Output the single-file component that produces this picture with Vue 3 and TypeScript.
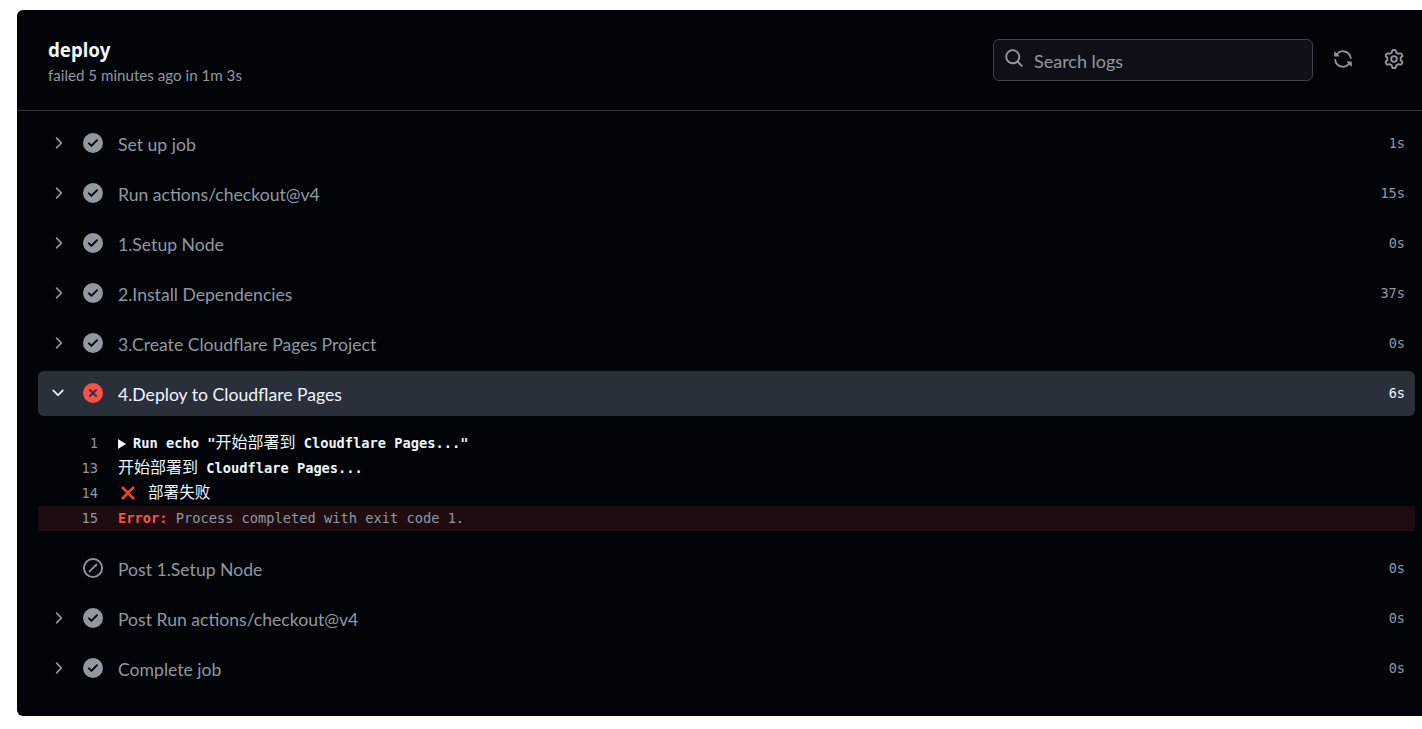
<script setup lang="ts">
type Status = 'ok' | 'fail' | 'skip'
interface Step { name: string; time: string; status: Status; chevron: boolean; open?: boolean }

const before: Step[] = [
  { name: 'Set up job', time: '1s', status: 'ok', chevron: true },
  { name: 'Run actions/checkout@v4', time: '15s', status: 'ok', chevron: true },
  { name: '1.Setup Node', time: '0s', status: 'ok', chevron: true },
  { name: '2.Install Dependencies', time: '37s', status: 'ok', chevron: true },
  { name: '3.Create Cloudflare Pages Project', time: '0s', status: 'ok', chevron: true },
  { name: '4.Deploy to Cloudflare Pages', time: '6s', status: 'fail', chevron: true, open: true },
]
const after: Step[] = [
  { name: 'Post 1.Setup Node', time: '0s', status: 'skip', chevron: false },
  { name: 'Post Run actions/checkout@v4', time: '0s', status: 'ok', chevron: true },
  { name: 'Complete job', time: '0s', status: 'ok', chevron: true },
]
const groups: Step[][] = [before, after]

const icons: Record<Status, string> = {
  ok: 'M8 16A8 8 0 1 1 8 0a8 8 0 0 1 0 16Zm3.78-9.72a.751.751 0 0 0-.018-1.042.751.751 0 0 0-1.042-.018L6.75 9.19 5.28 7.72a.751.751 0 0 0-1.042.018.751.751 0 0 0-.018 1.042l2 2a.75.75 0 0 0 1.06 0Z',
  fail: 'M2.343 13.657A8 8 0 1 1 13.658 2.343 8 8 0 0 1 2.343 13.657ZM6.03 4.97a.751.751 0 0 0-1.042.018.751.751 0 0 0-.018 1.042L6.94 8 4.97 9.97a.749.749 0 0 0 .326 1.275.749.749 0 0 0 .734-.215L8 9.06l1.97 1.97a.749.749 0 0 0 1.275-.326.749.749 0 0 0-.215-.734L9.06 8l1.97-1.97a.749.749 0 0 0-.326-1.275.749.749 0 0 0-.734.215L8 6.94Z',
  skip: 'M8 0a8 8 0 1 1 0 16A8 8 0 0 1 8 0ZM1.5 8a6.5 6.5 0 1 0 13 0 6.5 6.5 0 0 0-13 0Zm9.78-2.22-5.5 5.5a.749.749 0 0 1-1.275-.326.749.749 0 0 1 .215-.734l5.5-5.5a.751.751 0 0 1 1.042.018.751.751 0 0 1 .018 1.042Z',
}
const chevronRight = 'M6.22 3.22a.75.75 0 0 1 1.06 0l4.25 4.25a.75.75 0 0 1 0 1.06l-4.25 4.25a.751.751 0 0 1-1.042-.018.751.751 0 0 1-.018-1.042L9.94 8 6.22 4.28a.75.75 0 0 1 0-1.06Z'
const chevronDown = 'M12.78 5.22a.749.749 0 0 1 0 1.06l-4.25 4.25a.749.749 0 0 1-1.06 0L3.22 6.28a.749.749 0 1 1 1.06-1.06L8 8.939l3.72-3.719a.749.749 0 0 1 1.06 0Z'
const search = 'M10.68 11.74a6 6 0 0 1-7.922-8.982 6 6 0 0 1 8.982 7.922l3.04 3.04a.749.749 0 0 1-.326 1.275.749.749 0 0 1-.734-.215ZM11.5 7a4.499 4.499 0 1 0-8.997 0A4.499 4.499 0 0 0 11.5 7Z'
const sync = 'M1.705 8.005a.75.75 0 0 1 .834.656 5.5 5.5 0 0 0 9.592 2.97l-1.204-1.204a.25.25 0 0 1 .177-.427h3.646a.25.25 0 0 1 .25.25v3.646a.25.25 0 0 1-.427.177l-1.38-1.38A7.002 7.002 0 0 1 1.05 8.84a.75.75 0 0 1 .656-.834ZM8 2.5a5.487 5.487 0 0 0-4.131 1.869l1.204 1.204A.25.25 0 0 1 4.896 6H1.25A.25.25 0 0 1 1 5.75V2.104a.25.25 0 0 1 .427-.177l1.38 1.38A7.002 7.002 0 0 1 14.95 7.16a.75.75 0 0 1-1.49.178A5.5 5.5 0 0 0 8 2.5Z'
const gear = 'M8 0a8.2 8.2 0 0 1 .701.031C9.444.095 9.99.645 10.16 1.29l.288 1.107c.018.066.079.158.212.224.231.114.454.243.668.386.123.082.233.09.299.071l1.103-.303c.644-.176 1.392.021 1.82.63.27.385.506.792.704 1.218.315.675.111 1.422-.364 1.891l-.814.806c-.049.048-.098.147-.088.294.016.257.016.515 0 .772-.01.147.038.246.088.294l.814.806c.475.469.679 1.216.364 1.891a7.977 7.977 0 0 1-.704 1.217c-.428.61-1.176.807-1.82.63l-1.102-.302c-.067-.019-.177-.011-.3.071a5.909 5.909 0 0 1-.668.386c-.133.066-.194.158-.211.224l-.29 1.106c-.168.646-.715 1.196-1.458 1.26a8.006 8.006 0 0 1-1.402 0c-.743-.064-1.289-.614-1.458-1.26l-.289-1.106c-.018-.066-.079-.158-.212-.224a5.738 5.738 0 0 1-.668-.386c-.123-.082-.233-.09-.299-.071l-1.103.303c-.644.176-1.392-.021-1.82-.63a8.12 8.12 0 0 1-.704-1.218c-.315-.675-.111-1.422.363-1.891l.815-.806c.05-.048.098-.147.088-.294a6.214 6.214 0 0 1 0-.772c.01-.147-.038-.246-.088-.294l-.815-.806C.635 6.045.431 5.298.746 4.623a7.92 7.92 0 0 1 .704-1.217c.428-.61 1.176-.807 1.82-.63l1.102.302c.067.019.177.011.3-.071.214-.143.437-.272.668-.386.133-.066.194-.158.211-.224l.29-1.106C6.009.645 6.556.095 7.299.03 7.53.01 7.764 0 8 0Zm-.571 1.525c-.036.003-.108.036-.137.146l-.289 1.105c-.147.561-.549.967-.998 1.189-.173.086-.34.183-.5.29-.417.278-.97.423-1.529.27l-1.103-.303c-.109-.03-.175.016-.195.045-.22.312-.412.644-.573.99-.014.031-.021.11.059.19l.815.806c.411.406.562.957.53 1.456a4.709 4.709 0 0 0 0 .582c.032.499-.119 1.05-.53 1.456l-.815.806c-.081.08-.073.159-.059.19.162.346.353.677.573.989.02.03.085.076.195.046l1.102-.303c.56-.153 1.113-.008 1.53.27.161.107.328.204.501.29.447.222.85.629.997 1.189l.289 1.105c.029.109.101.143.137.146a6.6 6.6 0 0 0 1.142 0c.036-.003.108-.036.137-.146l.289-1.105c.147-.561.549-.967.998-1.189.173-.086.34-.183.5-.29.417-.278.97-.423 1.529-.27l1.103.303c.109.029.175-.016.195-.045.22-.313.411-.644.573-.99.014-.031.021-.11-.059-.19l-.815-.806c-.411-.406-.562-.957-.53-1.456a4.709 4.709 0 0 0 0-.582c-.032-.499.119-1.05.53-1.456l.815-.806c.081-.08.073-.159.059-.19a6.464 6.464 0 0 0-.573-.989c-.02-.03-.085-.076-.195-.046l-1.102.303c-.56.153-1.113.008-1.53-.27a4.44 4.44 0 0 0-.501-.29c-.447-.222-.85-.629-.997-1.189l-.289-1.105c-.029-.11-.101-.143-.137-.146a6.6 6.6 0 0 0-1.142 0ZM11 8a3 3 0 1 1-6 0 3 3 0 0 1 6 0ZM9.5 8a1.5 1.5 0 1 0-3.001.001A1.5 1.5 0 0 0 9.5 8Z'
</script>

<template>
  <main class="card">
    <header class="head">
      <div class="titles">
        <h1 class="title">deploy</h1>
        <p class="sub">failed 5 minutes ago in 1m 3s</p>
      </div>
      <div class="tools">
        <label class="search">
          <svg class="search-icon" viewBox="0 0 16 16"><path :d="search" /></svg>
          <span class="placeholder">Search logs</span>
        </label>
        <svg class="tool sync" viewBox="0 0 16 16"><path :d="sync" /></svg>
        <svg class="tool" viewBox="0 0 16 16"><path :d="gear" /></svg>
      </div>
    </header>

    <section class="steps">
      <template v-for="(group, g) in groups" :key="g">
        <div class="group">
          <div v-for="step in group" :key="step.name" class="step" :class="{ open: step.open }">
            <span class="chev">
              <svg v-if="step.chevron" viewBox="0 0 16 16"><path :d="step.open ? chevronDown : chevronRight" /></svg>
            </span>
            <svg class="status" :class="step.status" viewBox="0 0 16 16"><path :d="icons[step.status]" fill-rule="evenodd" /></svg>
            <span class="name">{{ step.name }}</span>
            <span class="time">{{ step.time }}</span>
          </div>
        </div>
        <div v-if="g === 0" class="log">
          <div class="line strong">
            <span class="num">1</span>
            <span class="txt"><i class="tri"></i>Run echo "<span class="cjk">开始部署到</span> Cloudflare Pages..."</span>
          </div>
          <div class="line strong">
            <span class="num">13</span>
            <span class="txt"><span class="cjk">开始部署到</span> Cloudflare Pages...</span>
          </div>
          <div class="line strong">
            <span class="num">14</span>
            <span class="txt">
              <svg class="cross" viewBox="0 0 16 16"><path d="M2 2 14 14M14 2 2 14" /></svg><span class="cjk short">部署失败</span>
            </span>
          </div>
          <div class="line err">
            <span class="num">15</span>
            <span class="txt"><b class="errlabel">Error:</b> Process completed with exit code 1.</span>
          </div>
        </div>
      </template>
    </section>
  </main>
</template>

<style scoped>
.card {
  margin: 10px 0 0 17px;
  height: 706px;
  background: #010409;
  border-radius: 6px 0 0 6px;
  overflow: hidden;
  font-family: Lato, "Noto Sans CJK SC", sans-serif;
  display: flex;
  flex-direction: column;
}
.head {
  height: 100px;
  flex: none;
  box-sizing: content-box;
  border-bottom: 1px solid #30363d;
  display: flex;
  align-items: center;
  justify-content: space-between;
  padding: 0 18px 0 31px;
}
.titles {
  margin-top: 2px;
}
.title {
  margin: 0 0 2px;
  color: #f0f6fc;
  font-family: "Noto Sans", sans-serif;
  font-size: 18.7px;
  line-height: 26px;
  font-weight: 700;
}
.sub {
  margin: 0;
  color: #9198a1;
  font-size: 15.15px;
  line-height: 20px;
}
.tools {
  display: flex;
  align-items: center;
}
.search {
  width: 320px;
  height: 42px;
  box-sizing: border-box;
  border: 1px solid #3d444d;
  border-radius: 6px;
  background: #0d1117;
  display: flex;
  align-items: center;
  padding: 0 0 0 10px;
}
.search-icon {
  width: 20px;
  height: 20px;
  fill: #9198a1;
  margin-top: -4px;
}
.placeholder {
  margin-left: 10px;
  margin-top: 1px;
  color: #9198a1;
  font-size: 18px;
}
.tool {
  width: 20px;
  height: 20px;
  fill: #9198a1;
  margin-left: 31px;
  margin-top: -2px;
}
.tool.sync { margin-left: 20px; }
.steps {
  padding: 10px 7px 0 21px;
}
.group {
  display: flex;
  flex-direction: column;
  gap: 5px;
}
.step {
  height: 45px;
  border-radius: 6px;
  display: flex;
  align-items: center;
  padding: 0 10px 0 11px;
  color: #9198a1;
}
.step.open {
  background: #2a303a;
  color: #f0f6fc;
}
.chev {
  width: 18px;
  height: 18px;
  margin-top: -2px;
  flex: none;
}
.chev svg {
  display: block;
  width: 18px;
  height: 18px;
  fill: #9198a1;
}
.open .chev svg { fill: #f0f6fc; }
.status {
  width: 20px;
  height: 20px;
  flex: none;
  margin: -2px 0 0 16px;
  fill: #9198a1;
}
.status.fail { fill: #f85149; }
.name {
  margin: 2px 0 0 15px;
  font-size: 17.6px;
  flex: 1;
}
.time {
  font-family: "DejaVu Sans Mono", monospace;
  font-size: 13.6px;
  margin-top: -2px;
}
.log {
  padding: 15px 0;
  font-family: "DejaVu Sans Mono", "Noto Sans CJK SC", monospace;
  font-size: 13.7px;
}
.line {
  height: 25px;
  line-height: 25px;
  display: flex;
  white-space: pre;
}
.num {
  width: 60px;
  text-align: right;
  color: #9198a1;
  flex: none;
}
.txt {
  margin-left: 20px;
  color: #f0f6fc;
  display: flex;
  align-items: center;
}
.strong .txt { font-weight: 700; }
.cjk {
  font-family: "Noto Sans CJK SC", sans-serif;
  font-size: 16px;
  font-weight: 400;
  margin-top: -4px;
}
.cjk.short {
  font-size: 15.6px;
  margin-top: -4px;
}
.tri {
  width: 0;
  height: 0;
  border-left: 8px solid #f0f6fc;
  border-top: 5px solid transparent;
  border-bottom: 5px solid transparent;
  margin-right: 7px;
}
.cross {
  width: 16px;
  height: 16px;
  margin: -2px 12px 0 2px;
  fill: none;
  stroke: #f0442f;
  stroke-width: 2.6;
}
.err { background: #1d0d10; }
.err .txt { color: #9198a1; display: block; }
.errlabel { color: #f85149; font-weight: 700; }
</style>

<style>
html, body {
  margin: 0;
  background: #fff;
  overflow: hidden;
}
</style>
